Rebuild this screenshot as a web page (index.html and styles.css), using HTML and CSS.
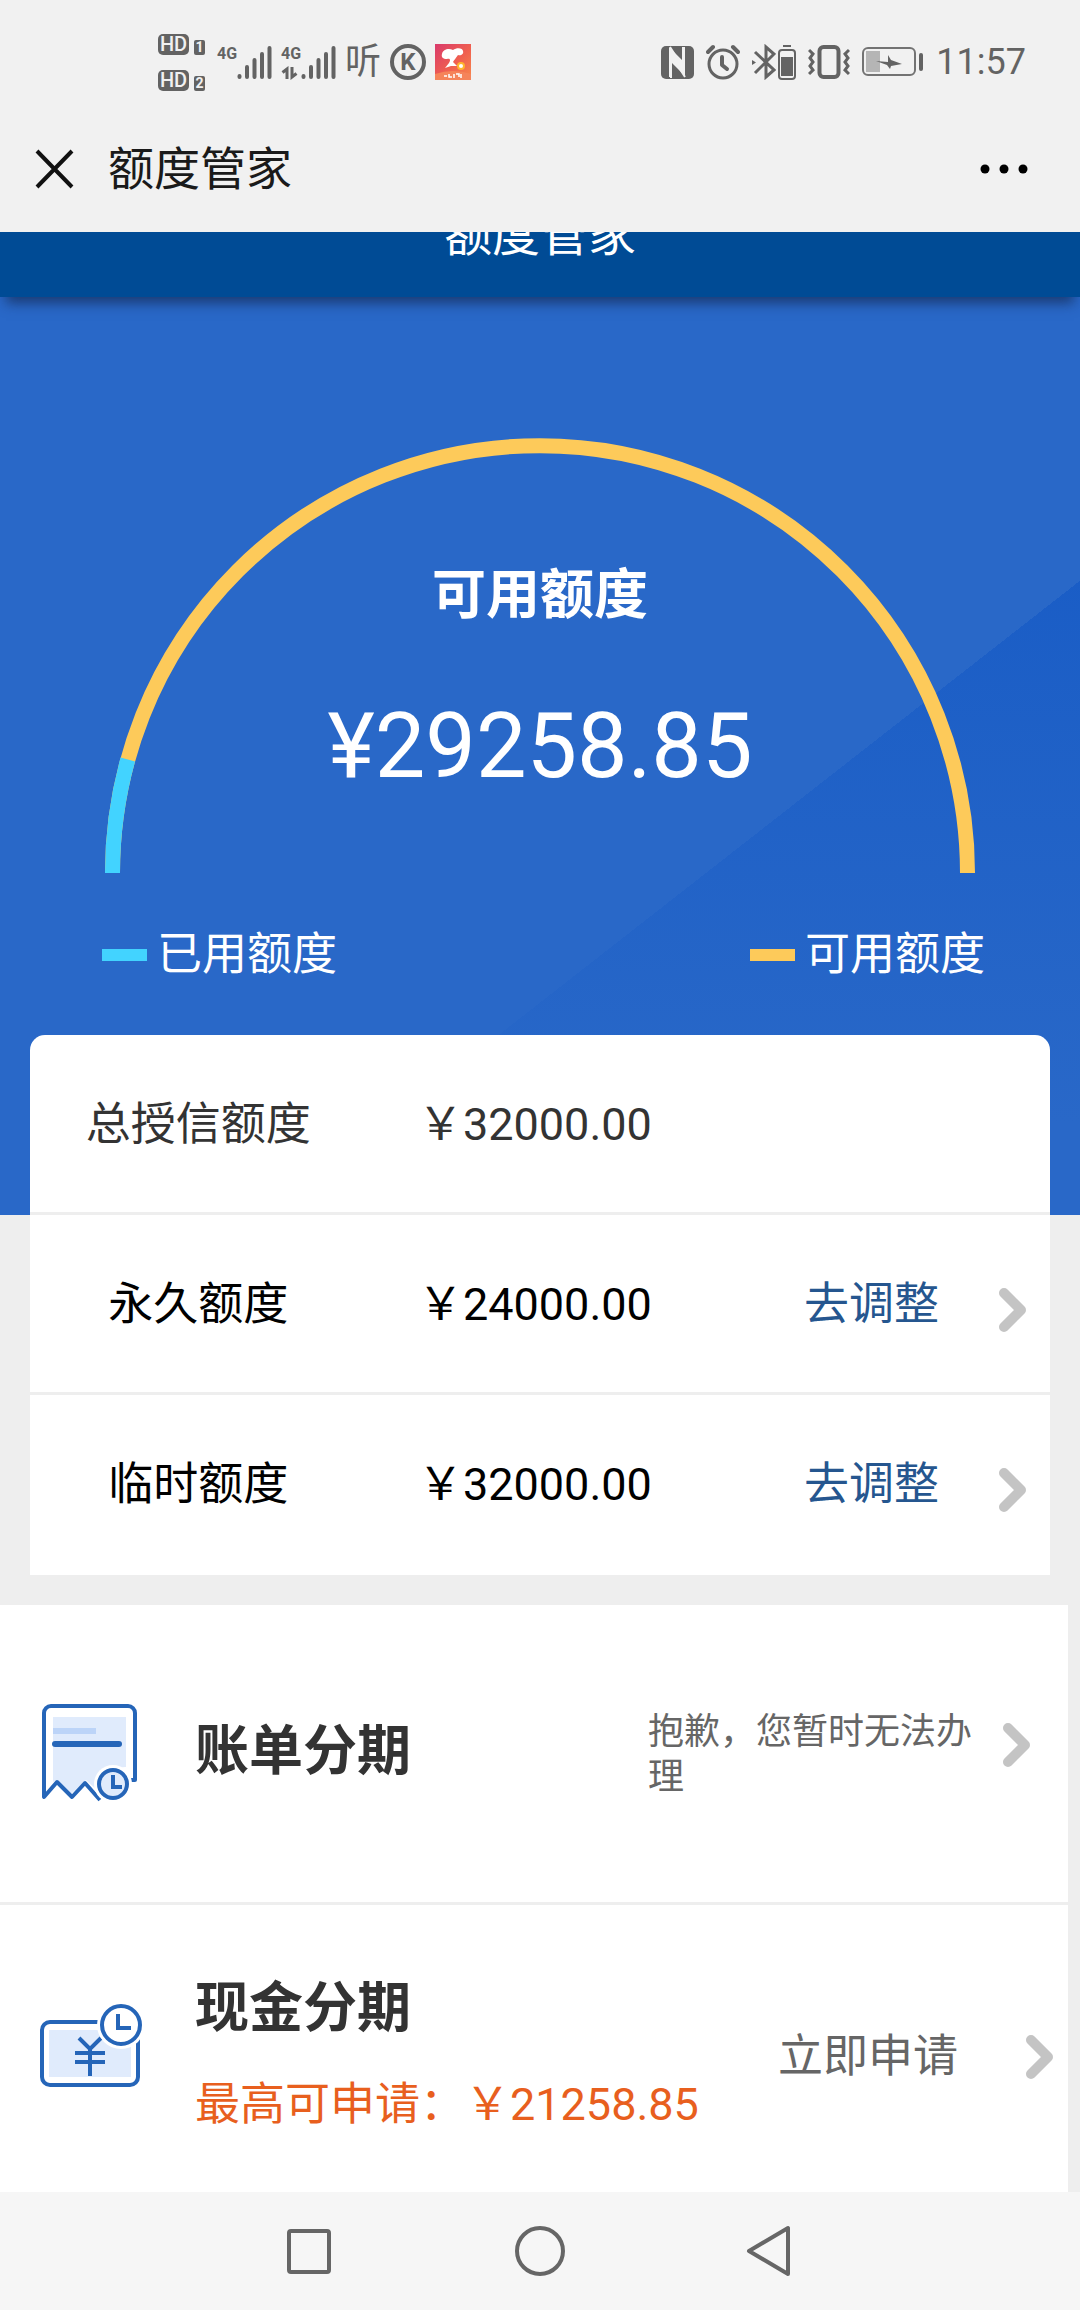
FILE: index.html
```html
<!DOCTYPE html>
<html lang="zh-CN">
<head>
<meta charset="utf-8">
<meta name="viewport" content="width=device-width, initial-scale=1">
<title>额度管家</title>
<link rel="stylesheet" href="styles.css">
</head>
<body>
<svg class="defs" width="0" height="0" aria-hidden="true">
  <symbol id="chevron" viewBox="0 0 30 46"><path d="M6 6 L23 23 L6 40" fill="none" stroke="#c4c4c4" stroke-width="10" stroke-linecap="round" stroke-linejoin="round"/></symbol>
  <symbol id="signal" viewBox="0 0 35 35"><path d="M2.500 31v1M10 22v10M17.500 15v17M25 9v23M32.500 3v29" fill="none" stroke="#636363" stroke-width="4" stroke-linecap="round"/></symbol>
</svg>

<header class="status">
  <div class="status-group status-left">
    <div class="sims">
      <div class="sim"><span class="hd">HD</span><span class="sim-no">1</span></div>
      <div class="sim"><span class="hd">HD</span><span class="sim-no">2</span></div>
    </div>
    <div class="net">
      <div class="net-info"><span class="net-type">4G</span></div>
      <svg width="35" height="35"><use href="#signal"/></svg>
    </div>
    <div class="net">
      <div class="net-info"><span class="net-type">4G</span>
        <svg width="18" height="14" viewBox="0 0 18 14"><path d="M6 13V3L1.500 6.500M11 1v10l4.500-3.500" fill="none" stroke="#636363" stroke-width="3"/></svg>
      </div>
      <svg width="35" height="35"><use href="#signal"/></svg>
    </div>
    <span class="listen">听</span>
    <span class="k-badge">K</span>
    <svg class="app-icon" width="36" height="36" viewBox="0 0 36 36">
      <defs><linearGradient id="jd" x1="0" y1="0" x2="1" y2="1"><stop offset="0" stop-color="#d93a6c"/><stop offset=".55" stop-color="#f0604f"/><stop offset="1" stop-color="#f88a4c"/></linearGradient></defs>
      <rect width="36" height="36" fill="url(#jd)"/>
      <path d="M0 30Q18 24 36 30V36H0z" fill="#f5845a"/>
      <path d="M7 10C8 5 14 4 18 6C22 3 28 4 28 7C29 10 26 12 23 11C21 14 19 16 18 18L22 22L16 22L10 24L14 19C16 16 15 14 12 15C8 15 6 13 7 10z" fill="#fff"/>
      <circle cx="26" cy="22" r="3" fill="#fff" stroke="#ffb52e" stroke-width="2"/>
      <path d="M9 32h3m2-2v3h3m2-3v4m2-4h3v3m2-3v4" stroke="#fff" stroke-width="1.500" fill="none"/>
    </svg>
  </div>
  <div class="status-group">
    <svg width="33" height="34" viewBox="0 0 33 34">
      <rect y="1" width="33" height="33" rx="5" fill="#636363"/>
      <path d="M8 2L21 15V2h3V31L11 18V32H8z" fill="#f1f1f1"/>
      <path d="M9 2L23 24V2M10 33V10L24 32" fill="none" stroke="#f1f1f1" stroke-width="2"/>
    </svg>
    <svg width="34" height="36" viewBox="0 0 34 36" fill="none" stroke="#636363" stroke-width="3" stroke-linecap="round" stroke-linejoin="round">
      <circle cx="17" cy="20" r="14"/><path d="M16 13v8l5 4" stroke-width="4"/><path d="M2 8l5-5M32 8l-5-5" stroke-width="4"/>
    </svg>
    <div class="bt">
      <svg width="24" height="36" viewBox="0 0 24 36" fill="none" stroke="#636363" stroke-width="3"><path d="M3 8l19 18-8 7V3l8 7L3 29"/><path d="M0 16l4 2.500-4 2.500z" fill="#636363" stroke="none"/></svg>
      <svg width="18" height="36" viewBox="0 0 18 36" fill="none" stroke="#636363" stroke-width="2"><path d="M5 2h8"/><rect x="1" y="6" width="16" height="29" rx="3"/><path d="M3 13h12v19H3z" fill="#636363" stroke="none"/></svg>
    </div>
    <svg width="42" height="34" viewBox="0 0 42 34" fill="none" stroke="#636363" stroke-width="3"><rect x="11.500" y="2" width="19" height="30" rx="4" stroke-width="4"/><path d="M1 5l4 4-3 4 3 4-3 4 3 4-4 4M41 5l-4 4 3 4-3 4 3 4-3 4 4 4"/></svg>
    <svg width="62" height="30" viewBox="0 0 62 30"><rect x="1" y="1" width="52" height="27" rx="5" fill="none" stroke="#737373" stroke-width="2"/><path d="M4 4h14v21H4z" fill="#b5b5b5"/><path d="M14 14l12 1V8l3 5 11 4-11 2-1 3-3-4z" fill="#636363"/><rect x="57" y="6" width="4" height="18" rx="2" fill="#636363"/></svg>
    <time class="clock">11:57</time>
  </div>
</header>

<nav class="titlebar">
  <button class="icon-btn" type="button" aria-label="关闭"><svg width="40" height="40" viewBox="0 0 40 40"><path d="M2 2l35 36M37 2L2 38" stroke="#111" stroke-width="4"/></svg></button>
  <h1 class="titlebar-title">额度管家</h1>
  <button class="icon-btn" type="button" aria-label="更多"><svg width="48" height="12" viewBox="0 0 48 12"><circle cx="5" cy="6" r="4.500"/><circle cx="24" cy="6" r="4.500"/><circle cx="43" cy="6" r="4.500"/></svg></button>
</nav>

<main class="webview">
  <div class="page-header">额度管家</div>

  <section class="hero">
    <div class="gauge">
      <svg class="gauge-arc" viewBox="0 0 870 435" fill="none" stroke-width="15" aria-hidden="true">
        <path d="M7.500 435A427.500 427.500 0 0 1 862.500 435" stroke="#fdca5a"/>
        <path d="M7.500 435A427.500 427.500 0 0 1 22.800 321.500" stroke="#42d3ff"/>
      </svg>
      <div class="gauge-text">
        <h2 class="gauge-label">可用额度</h2>
        <div class="gauge-amount">¥29258.85</div>
      </div>
    </div>
    <div class="legend">
      <span class="legend-item"><i class="swatch swatch-used"></i>已用额度</span>
      <span class="legend-item"><i class="swatch swatch-free"></i>可用额度</span>
    </div>
  </section>

  <section class="card">
    <table class="limits">
      <tr class="total"><th scope="row">总授信额度</th><td>￥32000.00</td><td></td></tr>
      <tr><th scope="row">永久额度</th><td>￥24000.00</td><td class="action"><a href="#permanent">去调整<svg class="chevron" width="30" height="46"><use href="#chevron"/></svg></a></td></tr>
      <tr><th scope="row">临时额度</th><td>￥32000.00</td><td class="action"><a href="#temporary">去调整<svg class="chevron" width="30" height="46"><use href="#chevron"/></svg></a></td></tr>
    </table>
  </section>

  <section class="services">
    <a class="service service-bill" href="#bill">
      <svg class="service-icon" width="104" height="104" viewBox="0 0 104 104" fill="none" stroke="#2565b8" stroke-width="4">
        <path d="M14 17h73v50a18 18 0 0 0-18 14L58 90 47 80 32 94 17 80 14 82z" fill="#e0ebfc" stroke="none"/>
        <path d="M14 28h43v6H14z" fill="#bcd4f8" stroke="none"/>
        <path d="M16 44h64" stroke-width="6" stroke-linecap="round"/>
        <path d="M61 100L46 83 33 97 18 82 5 97V13a7 7 0 0 1 7-7h77a7 7 0 0 1 7 7v67H90" stroke-linejoin="round"/>
        <circle cx="74" cy="84" r="19" fill="#fff" stroke="none"/>
        <circle cx="74" cy="84" r="14" fill="#e0ebfc"/><path d="M74 75v12h9"/>
      </svg>
      <div class="service-main"><h3 class="service-title">账单分期</h3></div>
      <p class="service-note">抱歉，您暂时无法办理</p>
      <svg class="service-arrow" width="30" height="46"><use href="#chevron"/></svg>
    </a>
    <a class="service service-cash" href="#cash">
      <svg class="service-icon" width="104" height="104" viewBox="0 0 104 104" fill="none" stroke="#2565b8" stroke-width="4">
        <path d="M10 37h82v47H10z" fill="#e0ebfc" stroke="none"/>
        <rect x="3" y="29" width="96" height="63" rx="8"/>
        <path d="M40 45l11 11 11-11M51 56v27M36 60h30M36 69h30"/>
        <circle cx="82" cy="32" r="24" fill="#fff" stroke="none"/>
        <circle cx="82" cy="32" r="19"/><path d="M79 21v14h13"/>
      </svg>
      <div class="service-main"><h3 class="service-title">现金分期</h3><p class="service-sub">最高可申请：￥21258.85</p></div>
      <span class="service-apply">立即申请</span>
      <svg class="service-arrow" width="30" height="46"><use href="#chevron"/></svg>
    </a>
  </section>
</main>

<nav class="sysnav">
  <button class="icon-btn" type="button" aria-label="最近任务"><svg width="50" height="52" viewBox="0 0 50 52"><rect x="5" y="6" width="40" height="41" rx="2"/></svg></button>
  <button class="icon-btn" type="button" aria-label="主页"><svg width="50" height="52" viewBox="0 0 50 52"><circle cx="25" cy="26" r="23"/></svg></button>
  <button class="icon-btn" type="button" aria-label="返回"><svg width="50" height="52" viewBox="0 0 50 52"><path d="M42 3v46L3 26z"/></svg></button>
</nav>
</body>
</html>
```
FILE: styles.css
```css
* { box-sizing: border-box; margin: 0; padding: 0; }

body {
  display: flex;
  flex-direction: column;
  height: 100vh;
  background: #eee;
  color: #333;
  font-family: Roboto, "Noto Sans CJK SC", sans-serif;
  font-size: 45px;
  line-height: 60px;
}

a { color: inherit; text-decoration: none; }
svg { display: block; flex: none; }
.defs { position: absolute; }
.icon-btn { border: 0; background: none; }

/* phone status bar */
.status {
  flex: none;
  display: flex;
  justify-content: space-between;
  align-items: center;
  height: 124px;
  padding: 0 54px 0 158px;
  background: #f1f1f1;
  color: #636363;
}
.status-group { display: flex; align-items: center; gap: 12px; }
.status-left { gap: 9px; }
.sims { display: grid; gap: 15px; margin-right: 3px; }
.sim { display: flex; align-items: flex-end; gap: 5px; }
.hd {
  width: 31px;
  border-radius: 5px;
  background: #636363;
  color: #f1f1f1;
  font-size: 20px;
  font-weight: 500;
  line-height: 21px;
  text-align: center;
}
.sim-no {
  width: 11px;
  border-radius: 2px;
  background: #636363;
  color: #f1f1f1;
  font-size: 14px;
  font-weight: 700;
  line-height: 15px;
  text-align: center;
}
.net { display: flex; height: 35px; }
.net-info { display: grid; align-content: space-between; width: 20px; }
.net-type { font-size: 16px; font-weight: 700; line-height: 18px; }
.listen { width: 36px; font-size: 36px; line-height: 36px; }
.k-badge {
  width: 36px;
  border: 4px solid #636363;
  border-radius: 50%;
  font-size: 24px;
  font-weight: 700;
  line-height: 28px;
  text-align: center;
}
.bt { display: flex; gap: 2px; }
.clock { font-size: 36px; line-height: 40px; }

/* in-app browser title bar */
.titlebar {
  flex: none;
  display: flex;
  align-items: center;
  gap: 33px;
  height: 108px;
  padding: 0 52px 18px 35px;
  background: #f1f1f1;
}
.titlebar-title { flex: 1; color: #1a1a1a; font-size: 46px; font-weight: 400; }

/* web page, scrolled down a little */
.webview { flex: 1; min-height: 0; overflow: hidden; }
.page-header {
  position: relative;
  height: 124px;
  margin-top: -59px;
  background: #004b95;
  box-shadow: 0 12px 12px -6px rgba(20, 40, 80, .7);
  color: #fff;
  font-size: 48px;
  line-height: 124px;
  text-align: center;
}

.hero {
  padding: 141px 0 230px;
  background:
    linear-gradient(to bottom, rgba(41, 104, 200, 0) 30%, #2968c8 90%),
    linear-gradient(142deg, #2968c8 64%, #1a5dc6 64%);
  color: #fff;
}
.gauge { display: grid; margin: 0 105px; }
.gauge-arc, .gauge-text { grid-area: 1 / 1; }
.gauge-arc { width: 100%; }
.gauge-text { display: grid; align-content: start; gap: 76px; padding-top: 128px; text-align: center; }
.gauge-label { font-size: 54px; font-weight: 700; line-height: 60px; }
.gauge-amount { font-size: 90px; line-height: 90px; }
.legend { display: flex; justify-content: space-between; margin-top: 52px; padding: 0 95px 0 102px; }
.legend-item { display: flex; align-items: center; gap: 10px; }
.swatch { width: 45px; height: 12px; }
.swatch-used { background: #42d3ff; }
.swatch-free { background: #fdca5a; }

.card {
  position: relative;
  margin: -180px 30px 30px;
  border-radius: 15px 15px 0 0;
  background: #fff;
  overflow: hidden;
}
.limits { width: 100%; table-layout: fixed; border-spacing: 0; color: #000; text-align: center; }
.limits .total { color: #333; }
.limits th, .limits td {
  width: 33%;
  height: 180px;
  padding-top: 3px;
  border-bottom: 3px solid #eee;
  font-weight: 400;
}
.limits tr:last-child > * { border-bottom-color: #fff; }
.limits td:last-child { width: 34%; }
.limits .action { position: relative; padding-right: 10px; color: #25568f; }
.chevron { position: absolute; top: 72px; right: 22px; }

.services { margin-right: 12px; background: #fff; }
.service {
  display: flex;
  align-items: center;
  height: 300px;
  border-bottom: 3px solid #eee;
}
.service-bill { padding: 0 36px 3px 39px; }
.service-bill .service-arrow { margin-bottom: 15px; }
.service-cash { padding: 6px 13px 0 39px; }
.service-cash .service-icon { margin-bottom: 24px; }
.service-icon { margin-right: 52px; }
.service-main { flex: 1; }
.service-title { font-size: 54px; font-weight: 700; line-height: 60px; }
.service-sub { margin-top: 36px; color: #e85f1e; line-height: 60px; white-space: nowrap; }
.service-note { width: 324px; margin: 6px 30px 0 0; color: #666; font-size: 36px; line-height: 45px; }
.service-apply { margin-right: 67px; color: #666; }

/* system navigation */
.sysnav {
  flex: none;
  display: flex;
  justify-content: center;
  align-items: center;
  gap: 181px;
  height: 118px;
  background: #f6f6f6;
}
.sysnav svg { fill: none; stroke: #666; stroke-width: 4; stroke-linejoin: round; }
```
